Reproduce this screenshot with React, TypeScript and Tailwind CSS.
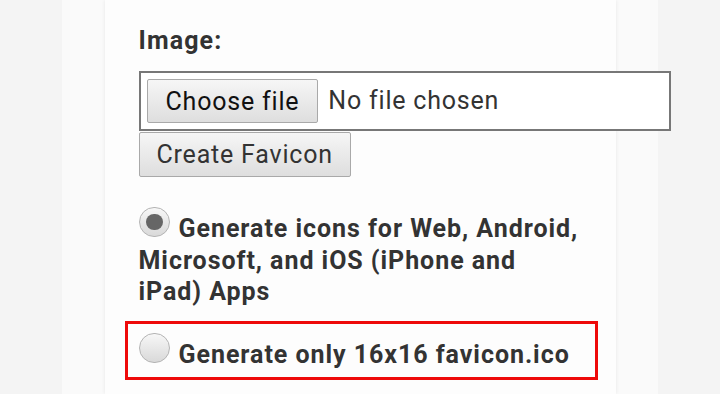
import React from 'react';

const Radio: React.FC<{ checked?: boolean }> = ({ checked }) => (
    <span className="inline-block align-baseline w-[31px] h-[30px] mr-[9px] rounded-full border border-[#b4b4b4] bg-gradient-to-b from-[#f7f7f7] to-[#d9d9d9]">
        {checked && <span className="block w-[17px] h-[16px] mx-auto mt-[6px] rounded-full bg-[#666]" />}
    </span>
);

export default function App() {
    return (
        <div className="w-full h-[394px] overflow-hidden bg-[#f4f4f4] flex justify-center" style={{ fontFamily: 'Roboto, "Liberation Sans", sans-serif' }}>
            <div className="w-[596px] h-full bg-[#fafafa] flex justify-center">
                <div className="w-[511px] h-full bg-[#fdfdfd] shadow-[0_0_4px_rgba(0,0,0,0.08)] pl-[34px] pr-[32px] pt-[27px]">
                    <div className="text-[25px] leading-[28px] tracking-[1.1px] font-bold text-[#333]">Image:</div>
                    <div className="mt-[16px] w-[532px] h-[60px] border-2 border-[#777] bg-white flex items-center px-[6px] gap-[10px]">
                        <button className="h-[44px] px-[18px] border border-[#a9a9a9] rounded-[2px] bg-gradient-to-b from-[#f6f6f6] to-[#dedede] text-[25px] tracking-[0.8px] leading-none text-[#111]">
                            Choose file
                        </button>
                        <span className="text-[25px] tracking-[0.8px] text-[#333]">No file chosen</span>
                    </div>
                    <button className="mt-[1px] h-[45px] px-[17px] border border-[#a9a9a9] rounded-[2px] bg-gradient-to-b from-[#f6f6f6] to-[#dedede] text-[25px] tracking-[0.8px] leading-none text-[#333]">
                        Create Favicon
                    </button>
                    <div className="mt-[30px] text-[25px] leading-[31.5px] tracking-[0.95px] font-bold text-[#333]">
                        <label className="block">
                            <Radio checked />
                            Generate icons for Web, Android, Microsoft, and iOS (iPhone and iPad) Apps
                        </label>
                        <label className="block mt-[13px] -mx-[14px] px-[11px] pt-[9px] pb-[7px] border-[3px] border-[#ee0a0a]">
                            <Radio />
                            Generate only 16x16 favicon.ico
                        </label>
                    </div>
                </div>
            </div>
        </div>
    );
}
